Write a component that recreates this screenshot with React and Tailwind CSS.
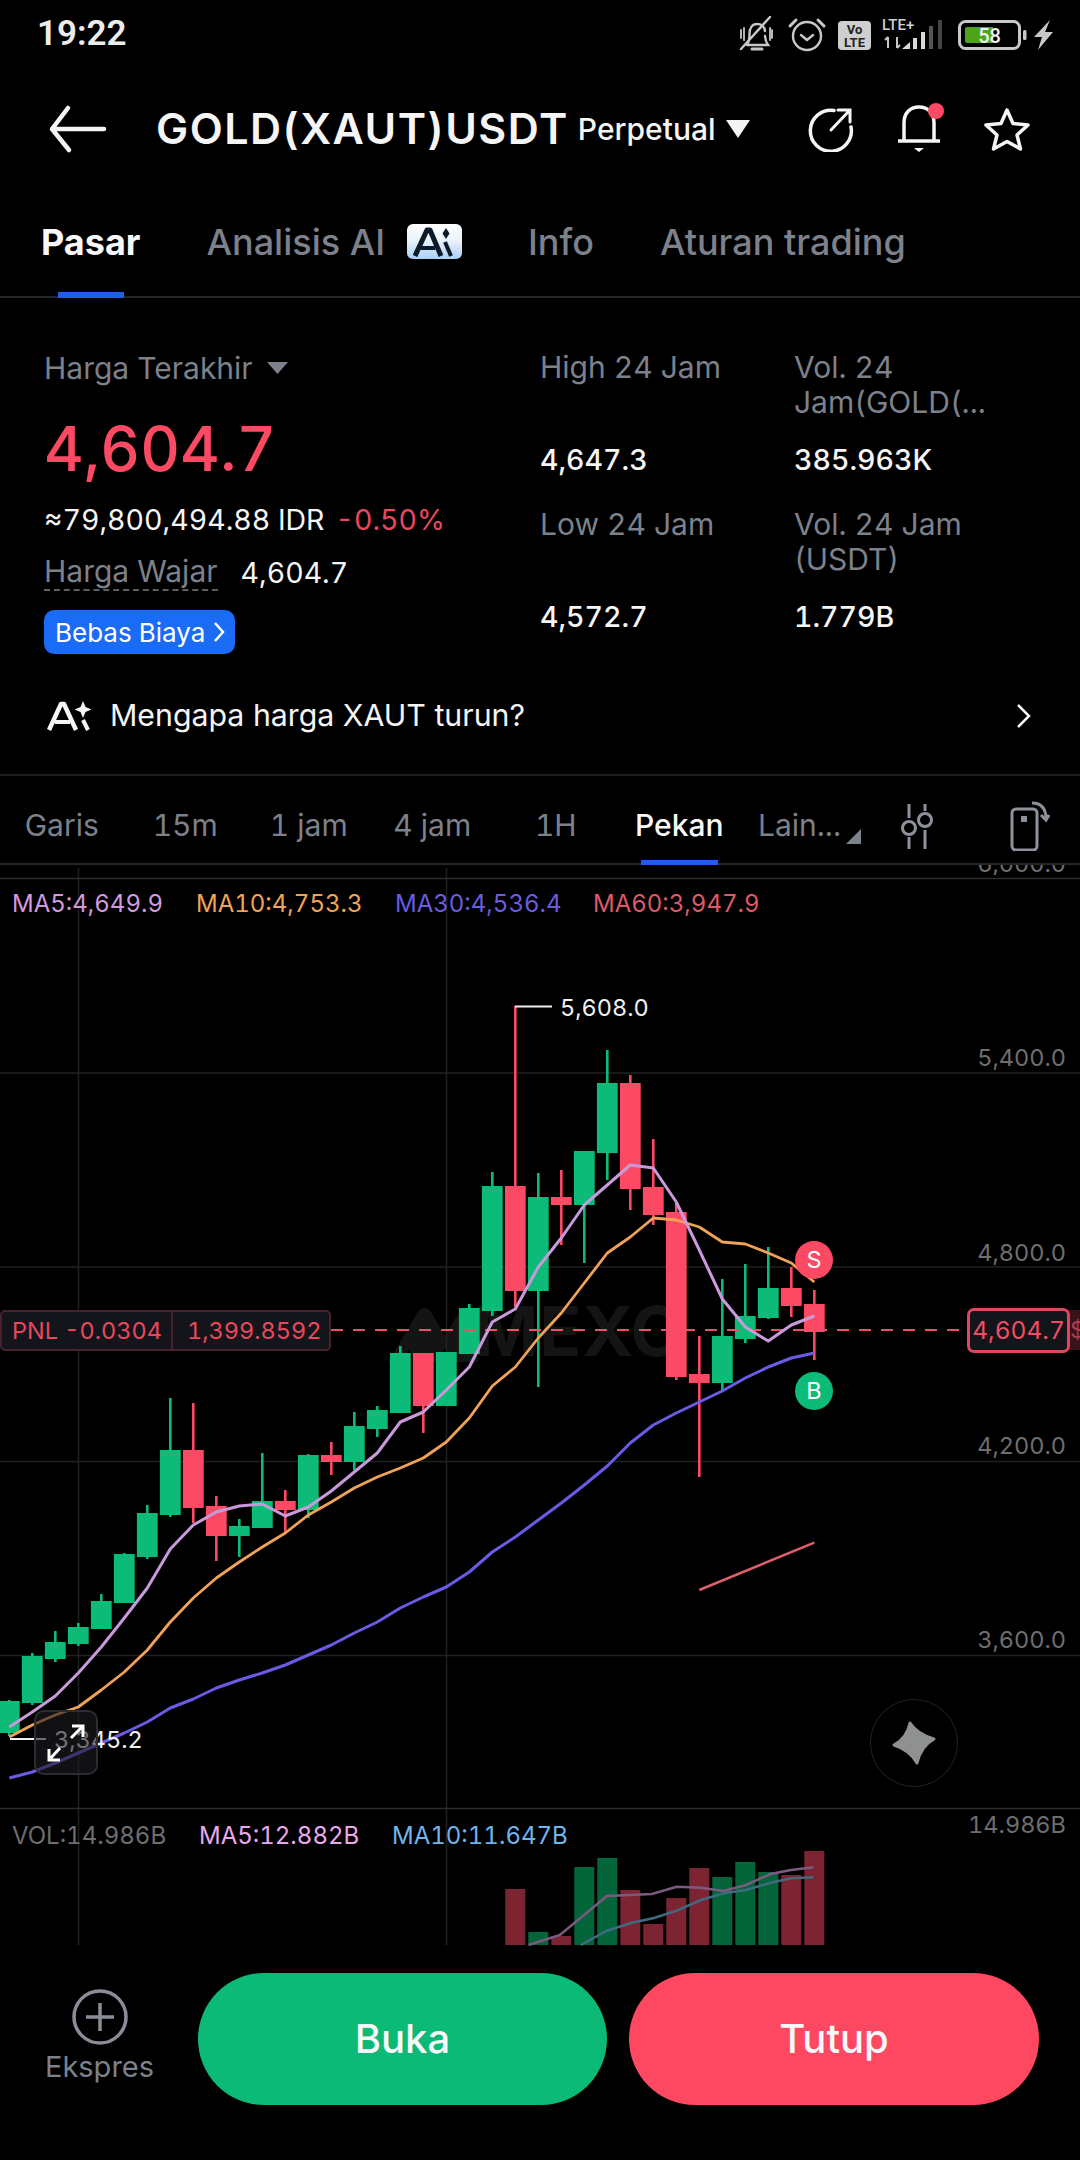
import React from "react";

const GREEN = "#0dbb78";
const RED = "#fd4a64";

// i, up?, body top, body bottom, wick top, wick bottom
const candles = [
  [0, 1, 1701, 1733, 1700, 1736],
  [1, 1, 1656, 1703, 1653, 1705],
  [2, 1, 1642, 1659, 1631, 1662],
  [3, 1, 1627, 1644, 1623, 1646],
  [4, 1, 1601, 1629, 1594, 1629],
  [5, 1, 1554, 1603, 1553, 1603],
  [6, 1, 1513, 1557, 1505, 1559],
  [7, 1, 1450, 1515, 1398, 1517],
  [8, 0, 1450, 1508, 1403, 1523],
  [9, 0, 1506, 1536, 1496, 1561],
  [10, 1, 1526, 1536, 1519, 1557],
  [11, 1, 1501, 1528, 1453, 1528],
  [12, 0, 1501, 1510, 1490, 1532],
  [13, 1, 1455, 1510, 1454, 1518],
  [14, 0, 1455, 1462, 1442, 1475],
  [15, 1, 1426, 1462, 1412, 1470],
  [16, 1, 1410, 1429, 1406, 1437],
  [17, 1, 1353, 1413, 1346, 1413],
  [18, 0, 1353, 1406, 1353, 1433],
  [19, 1, 1352, 1406, 1352, 1406],
  [20, 1, 1308, 1354, 1304, 1354],
  [21, 1, 1186, 1311, 1172, 1316],
  [22, 0, 1186, 1291, 1006, 1307],
  [23, 1, 1197, 1291, 1173, 1387],
  [24, 0, 1197, 1205, 1170, 1245],
  [25, 1, 1151, 1205, 1151, 1263],
  [26, 1, 1083, 1153, 1050, 1180],
  [27, 0, 1083, 1189, 1075, 1210],
  [28, 0, 1187, 1215, 1139, 1225],
  [29, 0, 1212, 1377, 1203, 1380],
  [30, 0, 1374, 1383, 1336, 1477],
  [31, 1, 1336, 1383, 1279, 1390],
  [32, 1, 1316, 1339, 1264, 1343],
  [33, 1, 1288, 1318, 1247, 1319],
  [34, 0, 1288, 1306, 1267, 1317],
  [35, 0, 1304, 1332, 1290, 1360],
];

const ma5 = [1727, 1712, 1696, 1673, 1647, 1618, 1588, 1549, 1525, 1512, 1506, 1504, 1516, 1507, 1491, 1472, 1453, 1422, 1412, 1390, 1367, 1322, 1309, 1267, 1238, 1205, 1185, 1165, 1168, 1202, 1250, 1299, 1327, 1341, 1325, 1316];
const ma10 = [1737, 1725, 1715, 1707, 1690, 1672, 1650, 1622, 1598, 1578, 1562, 1547, 1533, 1515, 1502, 1488, 1477, 1468, 1458, 1442, 1418, 1386, 1367, 1338, 1313, 1283, 1253, 1237, 1218, 1220, 1227, 1242, 1244, 1253, 1263, 1282];
const ma30 = [1778, 1772, 1763, 1753, 1743, 1733, 1722, 1708, 1699, 1688, 1680, 1673, 1665, 1655, 1645, 1633, 1622, 1608, 1597, 1587, 1572, 1552, 1537, 1520, 1503, 1485, 1466, 1443, 1425, 1413, 1402, 1391, 1378, 1367, 1358, 1353];

const volBars = [
  [22, 0, 1889], [23, 1, 1932], [24, 0, 1936], [25, 1, 1867], [26, 1, 1858], [27, 0, 1890], [28, 0, 1924],
  [29, 0, 1898], [30, 0, 1868], [31, 1, 1877], [32, 1, 1862], [33, 1, 1872], [34, 0, 1875], [35, 0, 1851],
];

const cx = (i) => 9.3 + 23 * i;
const toPts = (ys) => ys.map((y, i) => `${cx(i)},${y}`).join(" ");

function StatusIcons() {
  return (
    <svg width="322" height="44" viewBox="735 10 322 44" fill="none">
      {/* muted bell */}
      <g stroke="#c8c8c8" strokeWidth="2.4" strokeLinecap="round">
        <path d="M747 43c2-3 2.500-6 2.500-11 0-6 3-10 7.500-10s7.500 3 8 7M765 34c.3 4 1.500 7 3 9H747" />
        <path d="M741 28v8M772 28v8M744 26v12M770 26v12" strokeWidth="1.800" />
        <path d="M741 47l29-32" />
        <path d="M752 47h10" strokeWidth="3" />
      </g>
      {/* alarm */}
      <g stroke="#c8c8c8" strokeWidth="2.400" strokeLinecap="round" strokeLinejoin="round">
        <circle cx="807" cy="34" r="14" />
        <path d="M801 33l6 5 6-5" />
        <path d="M790 24l6-6M824 24l-6-6" strokeWidth="3" />
      </g>
      {/* volte */}
      <rect x="838" y="19" width="33" height="29" rx="4" fill="#cfcfcf" />
      <text x="854.500" y="32" textAnchor="middle" fontSize="13" fontWeight="700" fill="#222" fontFamily="Roboto, sans-serif">Vo</text>
      <text x="854.500" y="45" textAnchor="middle" fontSize="13" fontWeight="700" fill="#222" fontFamily="Roboto, sans-serif">LTE</text>
      {/* lte+ and signal */}
      <text x="882" y="28" fontSize="15" fontWeight="500" fill="#d0d0d0" fontFamily="Roboto, sans-serif">LTE+</text>
      <path d="M888 35v11M885 38l3-3M897 35v11M897 46l3-3" stroke="#c8c8c8" strokeWidth="2" />
      <path d="M902 47l8-7v7z" fill="#d8d8d8" />
      <rect x="913" y="36" width="4" height="11" fill="#d8d8d8" />
      <rect x="921" y="30" width="4" height="17" fill="#d8d8d8" />
      <rect x="929" y="24" width="4" height="23" fill="#555" />
      <rect x="938" y="18" width="4" height="29" fill="#444" />
      {/* battery */}
      <rect x="959.500" y="19.500" width="60" height="27" rx="6" stroke="#c8c8c8" strokeWidth="3" />
      <path d="M967 25h26v16h-26a2 2 0 0 1-2-2V27a2 2 0 0 1 2-2z" fill="#4fa51a" />
      <text x="989.500" y="41" textAnchor="middle" fontSize="20" fontWeight="500" fill="#f0f0f0" fontFamily="Roboto, sans-serif">58</text>
      <rect x="1023" y="28" width="3.500" height="10" rx="1.500" fill="#c8c8c8" />
      <path d="M1050 18l-16 17h8l-4 13 15-18h-8z" fill="#c8c8c8" />
    </svg>
  );
}

function AiBadge() {
  return (
    <span className="w-[55px] h-[35px] rounded-[6px] bg-gradient-to-b from-[#ffffff] via-[#e8f1fb] to-[#a9cff5] flex items-center justify-center ml-[22px]">
      <svg width="44" height="30" viewBox="0 0 44 30" fill="none">
        <path d="M2 29L14 3h3l11 26" stroke="#0c1a2a" strokeWidth="5" strokeLinejoin="round" />
        <path d="M8 21h14" stroke="#0c1a2a" strokeWidth="4" />
        <path d="M33 1l3.500 5.500L33 12l-3.500-5.500z" fill="#0c1a2a" />
        <path d="M32 15l6 14" stroke="#0c1a2a" strokeWidth="4" />
      </svg>
    </span>
  );
}

function Chart() {
  return (
    <div className="relative h-[1081px] overflow-hidden font-['Inter',sans-serif] text-[23.500px] tabular-nums">
      {/* watermark */}
      <span className="absolute left-[474px] top-[424px] h-[84px] leading-[84px] text-[69px] font-bold text-[#141414] tracking-[1px]">MEXC</span>

      <svg className="absolute left-0 top-0" width="1080" height="1081" viewBox="0 865 1080 1081" fill="none">
        <path d="M388 1362l30-50c3-5 10-5 13 0l14 24 14-24c3-5 10-5 13 0l6 50h-26l-7-14-8 14h-22l-6-12-7 12z" fill="#141414" />
        <g stroke="#1f2022" strokeWidth="1.500">
          <path d="M78.500 868V1945M446.500 868V1945" />
          <path d="M0 1073H1080M0 1267H1080M0 1461.500H1080M0 1655.500H1080" />
        </g>
        <path d="M0 878.500H1080M0 1808.500H1080" stroke="#2b2c2f" strokeWidth="1.500" />

        {candles.map(([i, up, top, bottom, wt, wb]) => (
          <g key={i} fill={up ? GREEN : RED}>
            <rect x={cx(i) - 1.3} y={wt} width="2.600" height={wb - wt} />
            <rect x={cx(i) - 10.4} y={top} width="20.800" height={bottom - top} />
          </g>
        ))}

        <path d="M331 1330H968" stroke="#e8516a" strokeWidth="2" strokeDasharray="12 10" />
        <path d="M515 1006.500H552" stroke="#f0f0f0" strokeWidth="2" />
        <path d="M10 1739H46" stroke="#f0f0f0" strokeWidth="2" />

        <polyline points={toPts(ma30)} stroke="#6a5be6" strokeWidth="3" strokeLinejoin="round" />
        <polyline points={toPts(ma10)} stroke="#f0a256" strokeWidth="2.800" strokeLinejoin="round" />
        <polyline points={toPts(ma5)} stroke="#c99adb" strokeWidth="3" strokeLinejoin="round" />
        <path d="M699.300 1590L814.300 1542.700" stroke="#dd5f6c" strokeWidth="2.500" />

        {volBars.map(([i, up, top]) => (
          <rect key={i} x={cx(i) - 10} y={top} width="20" height={1945 - top} fill={up ? "#05653a" : "#7d2433"} />
        ))}
        <polyline points="528.600,1945 560,1935 607,1896 652,1894 676.700,1886.700 701,1887.700 723.700,1891 746,1885 770.600,1874 791,1870 813.500,1867.300" stroke="#7c5a80" strokeWidth="2.500" />
        <polyline points="580.800,1945 607,1930.700 631.800,1922.700 654,1918 676.700,1910.700 701,1900 723.700,1893.300 746,1890 770.600,1882.700 791,1878.300 813.500,1877.300" stroke="#3f6a80" strokeWidth="2.500" />
      </svg>

      {/* axis labels */}
      <div className="absolute right-[14px] top-0 h-[10px] overflow-hidden text-[#6e6e6e]">
        <span className="block leading-[32px] -mt-[17px]">6,000.0</span>
      </div>
      <span className="absolute right-[14px] top-[177px] leading-[32px] text-[#6e6e6e]">5,400.0</span>
      <span className="absolute right-[14px] top-[372px] leading-[32px] text-[#6e6e6e]">4,800.0</span>
      <span className="absolute right-[14px] top-[565px] leading-[32px] text-[#6e6e6e]">4,200.0</span>
      <span className="absolute right-[14px] top-[759px] leading-[32px] text-[#6e6e6e]">3,600.0</span>
      <span className="absolute right-[14px] top-[944px] leading-[32px] text-[#6e6e6e]">14.986B</span>

      <span className="absolute left-[560px] top-[127px] leading-[32px] text-[#f0f0f0]">5,608.0</span>
      <span className="absolute left-[54px] top-[859px] leading-[32px] text-[#f0f0f0]">3,345.2</span>

      {/* indicator rows */}
      <div className="absolute left-[12px] top-[23px] flex leading-[32px] text-[24px]">
        <span className="w-[184px] text-[#d09adf]">MA5:4,649.9</span>
        <span className="w-[199px] text-[#f0a458]">MA10:4,753.3</span>
        <span className="w-[198px] text-[#6a5be0]">MA30:4,536.4</span>
        <span className="text-[#dc5a68]">MA60:3,947.9</span>
      </div>
      <div className="absolute left-[12px] top-[955px] flex leading-[32px] text-[24px]">
        <span className="w-[187px] text-[#6e6e6e]">VOL:14.986B</span>
        <span className="w-[193px] text-[#e9a8ee]">MA5:12.882B</span>
        <span className="text-[#6fb4ea]">MA10:11.647B</span>
      </div>

      {/* PNL tag */}
      <div className="absolute left-0 top-[445px] w-[331px] h-[41px] flex items-center rounded-[5px] border-2 border-[#47222d] bg-[#14151a] text-[#e8475f] leading-none whitespace-nowrap">
        <span className="w-[171px] pl-[10px] border-r-2 border-[#47222d] h-full flex items-center">PNL -0.0304</span>
        <span className="pl-[14px]">1,399.8592</span>
      </div>

      {/* last price tag */}
      <div className="absolute right-0 top-[445px] w-[12px] h-[40px] bg-[#3a1219] overflow-hidden text-[#b23a4e] leading-[40px] pl-[2px]">$</div>
      <div className="absolute left-[967px] top-[443px] w-[103px] h-[45px] flex items-center justify-center rounded-[7px] border-[3px] border-[#e0475f] bg-[#14151a] text-[#f04c64] text-[24.500px] leading-none">4,604.7</div>

      {/* S / B markers */}
      <span className="absolute left-[795px] top-[376px] w-[38px] h-[38px] rounded-full bg-[#fd4a64] text-white flex items-center justify-center">S</span>
      <span className="absolute left-[795px] top-[507px] w-[38px] h-[38px] rounded-full bg-[#0dbb78] text-white flex items-center justify-center">B</span>

      {/* expand button */}
      <div className="absolute left-[34px] top-[845px] w-[64px] h-[65px] rounded-[10px] border-2 border-[#2c2d31] bg-[#1c1d22]/60 flex items-center justify-center">
        <svg width="38" height="38" viewBox="0 0 38 38" fill="none" stroke="#ffffff" strokeWidth="3">
          <path d="M24 14L36 2M25 2h11v11" />
          <path d="M13 24L2 36M2 25v11h11" />
        </svg>
      </div>

      {/* star button */}
      <div className="absolute left-[870px] top-[834px] w-[88px] h-[88px] rounded-full border border-[#222326] flex items-center justify-center">
        <svg width="44" height="44" viewBox="0 0 44 44">
          <path d="M18 2Q25 13 42 18Q29 25 25 42Q18 29 2 24Q15 17 18 2z" fill="#8f9090" stroke="#8f9090" strokeWidth="3" strokeLinejoin="round" />
        </svg>
      </div>
    </div>
  );
}

export default function App() {
  return (
    <div className="w-[1080px] h-[2160px] bg-black text-[#f5f5f5] font-['Inter',sans-serif] overflow-hidden">
      {/* status bar */}
      <div className="h-[68px] flex items-center justify-between pl-[37px] pr-[23px]">
        <span className="text-[35px] font-semibold font-['Roboto',sans-serif] text-[#ececec]">19:22</span>
        <StatusIcons />
      </div>

      {/* header */}
      <div className="h-[118px] pt-[3px] flex items-center">
        <svg className="ml-[48px]" width="60" height="50" viewBox="0 0 60 50" fill="none" stroke="#f5f5f5" strokeWidth="4.500" strokeLinecap="round" strokeLinejoin="round">
          <path d="M56 25H5M20 4L4 25l17 21" />
        </svg>
        <span className="ml-[48px] text-[43px] tracking-[1.500px] font-semibold leading-none whitespace-nowrap">GOLD(XAUT)USDT</span>
        <span className="ml-[9px] text-[30px] font-medium leading-none">Perpetual</span>
        <svg className="ml-[10px]" width="24" height="18" viewBox="0 0 24 18"><path d="M0 0h24L12 18z" fill="#f5f5f5" /></svg>
        <svg className="ml-[58px]" width="46" height="46" viewBox="0 0 46 46" fill="none" stroke="#f5f5f5" strokeWidth="3.500" strokeLinecap="round">
          <path d="M26 4.500A20.500 20.500 0 1 0 43 21" />
          <path d="M23 24L41 5M30 4h12v12" strokeWidth="3" />
        </svg>
        <div className="relative ml-[43px] w-[44px] h-[50px]">
          <svg width="44" height="50" viewBox="0 0 44 50" fill="none" stroke="#f5f5f5" strokeWidth="3.500">
            <path d="M1 37h42M7 37V19C7 9 13 3 22 3s15 6 15 16v18" />
            <path d="M17 44h10l-5 4z" fill="#f5f5f5" strokeWidth="0" />
          </svg>
          <span className="absolute -right-[3px] -top-[1px] w-[16px] h-[16px] rounded-full bg-[#fd4a64]" />
        </div>
        <svg className="ml-[43px]" width="46" height="44" viewBox="0 0 46 44" fill="none" stroke="#f5f5f5" strokeWidth="3.500" strokeLinejoin="round">
          <path d="M23 3l6 13.500 15 1.500-11 10 3.500 14L23 34.500 9.500 42 13 28 2 18l15-1.500z" />
        </svg>
      </div>

      {/* tabs */}
      <div className="relative h-[112px] flex items-center pl-[41px] pt-[1px] border-b-2 border-[#23262b] text-[36px] font-medium text-[#7c818b]">
        <span className="font-bold text-[#f8f8f8]">Pasar</span>
        <span className="ml-[66px]">Analisis AI</span>
        <AiBadge />
        <span className="ml-[66px]">Info</span>
        <span className="ml-[66px]">Aturan trading</span>
        <span className="absolute left-[58px] -bottom-[2px] w-[66px] h-[6px] bg-[#1f5fe6]" />
      </div>

      {/* market stats */}
      <div className="h-[388px] flex text-[30px] leading-[35px] tabular-nums">
        <div className="w-[540px] pl-[44px] pt-[50px]">
          <div className="h-[40px] flex items-center text-[#7c818b]">
            Harga Terakhir
            <svg className="ml-[14px]" width="21" height="12" viewBox="0 0 21 12"><path d="M0 0h21L10.500 12z" fill="#7c818b" /></svg>
          </div>
          <div className="h-[80px] mt-[21px] flex items-center text-[61.500px] font-medium text-[#fd4a64] leading-none">4,604.7</div>
          <div className="h-[40px] mt-[10px] flex items-center text-[28.500px]">
            <span>≈79,800,494.88 IDR</span>
            <span className="ml-[11px] text-[#e8475f]">-0.50%</span>
          </div>
          <div className="h-[40px] mt-[13px] flex items-center">
            <span className="text-[#7c818b] border-b-2 border-dashed border-[#5d6069] leading-[36px]">Harga Wajar</span>
            <span className="ml-[23px] text-[28.500px]">4,604.7</span>
          </div>
          <div className="mt-[18px] w-[191px] h-[44px] rounded-[10px] bg-[#1a6bf5] flex items-center pl-[11px] text-[26px] text-white">
            Bebas Biaya
            <svg className="ml-[8px]" width="12" height="24" viewBox="0 0 12 24" fill="none" stroke="#fff" strokeWidth="2.500"><path d="M2 3l8 9-8 9" /></svg>
          </div>
        </div>
        <div className="w-[254px] pt-[52px]">
          <div className="h-[70px] text-[#7c818b]">High 24 Jam</div>
          <div className="mt-[19px] h-[40px] flex items-center font-medium text-[28.500px]">4,647.3</div>
          <div className="mt-[28px] h-[70px] text-[#7c818b]">Low 24 Jam</div>
          <div className="mt-[19px] h-[40px] flex items-center font-medium text-[28.500px]">4,572.7</div>
        </div>
        <div className="w-[250px] pt-[52px]">
          <div className="h-[70px] text-[#7c818b]">Vol. 24<br />Jam(GOLD(...</div>
          <div className="mt-[19px] h-[40px] flex items-center font-medium text-[28.500px]">385.963K</div>
          <div className="mt-[28px] h-[70px] text-[#7c818b]">Vol. 24 Jam<br />(USDT)</div>
          <div className="mt-[19px] h-[40px] flex items-center font-medium text-[28.500px]">1.779B</div>
        </div>
      </div>

      {/* AI prompt row */}
      <div className="h-[90px] pb-[28px] flex items-center pl-[47px] pr-[48px] border-b-2 border-[#1c1d20] text-[30.300px]">
        <svg width="47" height="30" viewBox="0 0 47 30" fill="none" stroke="#f5f5f5">
          <path d="M2 29L14 3h3l12 26" strokeWidth="4.500" strokeLinejoin="round" />
          <path d="M8 21h15" strokeWidth="4" />
          <path d="M36 0l2.500 6 6 2.500-6 2.500-2.500 6-2.500-6-6-2.500 6-2.500z" fill="#f5f5f5" strokeWidth="0" />
          <path d="M36 19l5 10" strokeWidth="4" />
        </svg>
        <span className="ml-[16px] flex-1">Mengapa harga XAUT turun?</span>
        <svg width="16" height="26" viewBox="0 0 16 26" fill="none" stroke="#f5f5f5" strokeWidth="2.500"><path d="M2 2l11 11L2 24" /></svg>
      </div>

      {/* interval tabs */}
      <div className="relative h-[89px] pt-[12px] flex items-center border-b-2 border-[#23262b] text-[30px] text-[#7c818b] tabular-nums">
        <span className="w-[123.500px] text-center">Garis</span>
        <span className="w-[123.500px] text-center">15m</span>
        <span className="w-[123.500px] text-center">1 jam</span>
        <span className="w-[123.500px] text-center">4 jam</span>
        <span className="w-[123.500px] text-center">1H</span>
        <span className="w-[123.500px] text-center font-medium text-[#f8f8f8]">Pekan</span>
        <span className="ml-[17px]">Lain...</span>
        <svg className="ml-[5px] mt-[22px]" width="15" height="15" viewBox="0 0 15 15"><path d="M15 0v15H0z" fill="#7c818b" /></svg>
        <svg className="ml-[39px]" width="34" height="46" viewBox="0 0 34 46" fill="none" stroke="#8d919a" strokeWidth="3">
          <path d="M9 1v14M9 34v12M25 1v7M25 27v19" />
          <circle cx="9" cy="25" r="6.500" />
          <circle cx="25" cy="17" r="6.500" />
        </svg>
        <svg className="ml-[76px]" width="40" height="50" viewBox="0 0 40 50" fill="none" stroke="#8d919a" strokeWidth="3">
          <rect x="2" y="8" width="25" height="41" rx="4" />
          <rect x="11" y="15" width="6" height="6" fill="#8d919a" strokeWidth="0" />
          <path d="M22 2c8 0 14 4 14 16M31 14l5 5 3-5" />
        </svg>
        <span className="absolute left-[641px] -bottom-[2px] w-[77px] h-[5px] bg-[#1f5fe6]" />
      </div>

      <Chart />

      {/* bottom actions */}
      <div className="h-[214px] flex pt-[27px] pl-[46px] text-[#f8f8f8]">
        <div className="w-[107px] flex flex-col items-center pt-[16px]">
          <svg width="56" height="56" viewBox="0 0 56 56" fill="none" stroke="#8a8d96" strokeWidth="3.500">
            <circle cx="28" cy="28" r="26" />
            <path d="M14 28h28M28 14v28" />
          </svg>
          <span className="mt-[4px] text-[29px] text-[#7c818b] leading-[36px]">Ekspres</span>
        </div>
        <button className="ml-[45px] w-[409px] h-[132px] rounded-full bg-[#0cba77] text-[40px] font-medium">Buka</button>
        <button className="ml-[22px] w-[410px] h-[132px] rounded-full bg-[#fe4760] text-[40px] font-medium">Tutup</button>
      </div>
    </div>
  );
}
